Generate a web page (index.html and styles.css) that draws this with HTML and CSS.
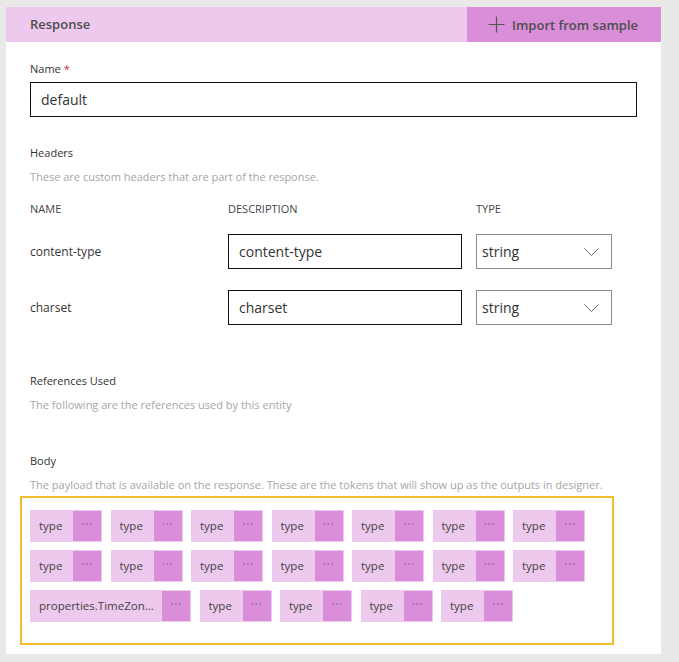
FILE: index.html
```html
<!DOCTYPE html>
<html>
<head>
<meta charset="utf-8">
<link rel="stylesheet" href="styles.css">
</head>
<body>
<div class="panel">
  <div class="bar">
    <div class="title">Response</div>
    <div class="import">
      <svg class="plus" width="17" height="17" viewBox="0 0 17 17"><path d="M8.5 0.5V16.5M0.5 8.5H16.5" stroke="#555" stroke-width="1.2" fill="none"/></svg>
      <span>Import from sample</span>
    </div>
  </div>
  <div class="content">
    <div class="label first">Name <span class="req">*</span></div>
    <div class="input name-input">default</div>

    <div class="label headers">Headers</div>
    <div class="desc">These are custom headers that are part of the response.</div>

    <div class="grid colhead">
      <div>NAME</div><div>DESCRIPTION</div><div>TYPE</div>
    </div>
    <div class="grid row row1">
      <div class="rowname">content-type</div>
      <div class="input desc-input">content-type</div>
      <div class="select"><span>string</span><svg width="15" height="8" viewBox="0 0 15 8"><path d="M0.5 0.5L7.5 7.5L14.5 0.5" stroke="#666" stroke-width="1" fill="none"/></svg></div>
    </div>
    <div class="grid row row2">
      <div class="rowname">charset</div>
      <div class="input desc-input">charset</div>
      <div class="select"><span>string</span><svg width="15" height="8" viewBox="0 0 15 8"><path d="M0.5 0.5L7.5 7.5L14.5 0.5" stroke="#666" stroke-width="1" fill="none"/></svg></div>
    </div>

    <div class="label refs">References Used</div>
    <div class="desc">The following are the references used by this entity</div>

    <div class="label body-label">Body</div>
    <div class="desc">The payload that is available on the response. These are the tokens that will show up as the outputs in designer.</div>

    <div class="tokens">
      <div class="chip"><span class="chip-text">type</span><span class="chip-more">···</span></div>
      <div class="chip"><span class="chip-text">type</span><span class="chip-more">···</span></div>
      <div class="chip"><span class="chip-text">type</span><span class="chip-more">···</span></div>
      <div class="chip"><span class="chip-text">type</span><span class="chip-more">···</span></div>
      <div class="chip"><span class="chip-text">type</span><span class="chip-more">···</span></div>
      <div class="chip"><span class="chip-text">type</span><span class="chip-more">···</span></div>
      <div class="chip"><span class="chip-text">type</span><span class="chip-more">···</span></div>
      <div class="chip"><span class="chip-text">type</span><span class="chip-more">···</span></div>
      <div class="chip"><span class="chip-text">type</span><span class="chip-more">···</span></div>
      <div class="chip"><span class="chip-text">type</span><span class="chip-more">···</span></div>
      <div class="chip"><span class="chip-text">type</span><span class="chip-more">···</span></div>
      <div class="chip"><span class="chip-text">type</span><span class="chip-more">···</span></div>
      <div class="chip"><span class="chip-text">type</span><span class="chip-more">···</span></div>
      <div class="chip"><span class="chip-text">type</span><span class="chip-more">···</span></div>
      <div class="chip wide"><span class="chip-text">properties.TimeZon...</span><span class="chip-more">···</span></div>
      <div class="chip"><span class="chip-text">type</span><span class="chip-more">···</span></div>
      <div class="chip"><span class="chip-text">type</span><span class="chip-more">···</span></div>
      <div class="chip"><span class="chip-text">type</span><span class="chip-more">···</span></div>
      <div class="chip"><span class="chip-text">type</span><span class="chip-more">···</span></div>
    </div>
  </div>
</div>
</body>
</html>
```

FILE: styles.css
```css
* { box-sizing: border-box; }

html, body {
  margin: 0;
  background: #e9e9e9;
}

body {
  padding: 7px 18px 8px 6px;
  font-family: "Open Sans", "Noto Sans", sans-serif;
  color: #333;
}

.panel {
  background: #fff;
  width: 655px;
}

.bar {
  display: flex;
  height: 35px;
  background: #edc9ed;
}

.title {
  flex: 1;
  padding-left: 24px;
  font-size: 13px;
  font-weight: 600;
  line-height: 35px;
  color: #4e4e4e;
}

.import {
  width: 194px;
  background: #da8eda;
  display: flex;
  align-items: center;
  padding-left: 21px;
  font-size: 13px;
  font-weight: 600;
  color: #4e4e4e;
}

.plus {
  margin-right: 7px;
}

.content {
  padding: 17px 24px 9px 24px;
}

.label {
  font-size: 11px;
  line-height: 20px;
  color: #333;
}

.req {
  color: #c4314b;
}

.desc {
  font-size: 11px;
  line-height: 20px;
  color: #a6a6a6;
  margin-top: 4px;
  white-space: nowrap;
}

.input {
  border: 1px solid #111;
  height: 35px;
  padding-left: 10px;
  font-size: 14px;
  line-height: 33px;
  color: #333;
}

.name-input {
  margin-top: 3px;
  width: 607px;
}

.headers { margin-top: 26px; }

.grid {
  display: grid;
  grid-template-columns: 198px 248px 136px;
  align-items: center;
}

.colhead {
  margin-top: 12px;
  font-size: 11px;
  line-height: 20px;
  color: #444;
}

.row { height: 35px; }
.row1 { margin-top: 15px; }
.row2 { margin-top: 21px; }

.rowname {
  font-size: 12px;
  color: #333;
}

.desc-input { width: 234px; }

.select {
  height: 35px;
  border: 1px solid #8a8a8a;
  display: flex;
  align-items: center;
  justify-content: space-between;
  padding: 0 12px 0 5px;
  font-size: 14px;
  color: #333;
}

.refs { margin-top: 46px; }
.body-label { margin-top: 36px; }

.tokens {
  margin: 1px 0 0 -10px;
  width: 594px;
  height: 149px;
  border: 2px solid #f3ba2b;
  padding: 12px 8px 0 8px;
  display: flex;
  flex-wrap: wrap;
  align-content: flex-start;
  column-gap: 8.5px;
  row-gap: 8px;
}

.chip {
  width: 72px;
  height: 32px;
  border: 1px solid #edc9ed;
  background: #edc9ed;
  display: flex;
}

.chip.wide { width: 161px; }

.chip-text {
  flex: 1;
  padding-left: 8px;
  font-size: 11.5px;
  line-height: 30px;
  color: #444;
  white-space: nowrap;
}

.chip-more {
  width: 28px;
  background: #da8eda;
  text-align: center;
  font-size: 13px;
  line-height: 27px;
  color: #8e6c8e;
  letter-spacing: 0.5px;
}
```
